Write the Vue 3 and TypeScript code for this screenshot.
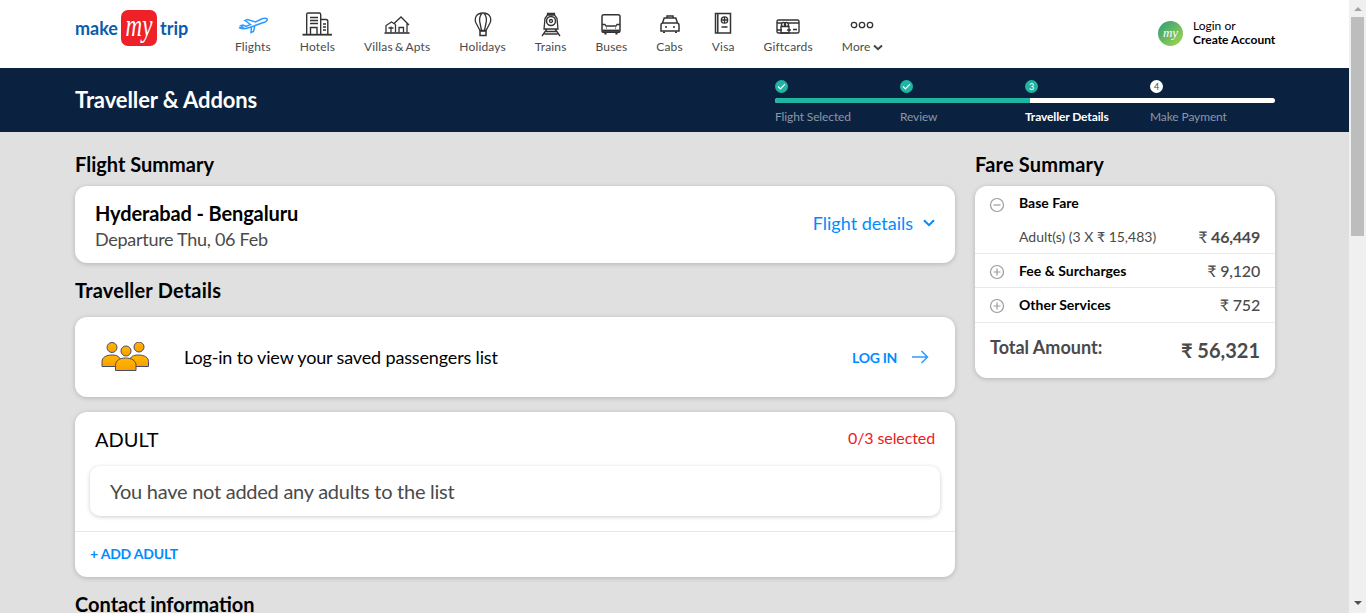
<template>
  <div class="page">
    <div class="scroll-area">
      <header class="topbar">
        <div class="wrap topbar-in">
          <div class="logo">
            <span class="logo-word">make</span>
            <span class="logo-box"><span class="logo-my">my</span></span>
            <span class="logo-word">trip</span>
          </div>
          <nav class="nav">
            <div v-for="item in navItems" :key="item.label" class="nav-item">
              <svg class="nav-icon" :width="item.w" height="28" :viewBox="`0 0 ${item.w} 28`" fill="none" stroke="#333" stroke-width="1.3" v-html="item.icon"></svg>
              <span class="nav-label">
                {{ item.label }}
                <svg v-if="item.label === 'More'" width="10" height="7" viewBox="0 0 10 7" fill="none" stroke="#444" stroke-width="2"><path d="M1 1.5 5 5.2 9 1.5" /></svg>
              </span>
            </div>
          </nav>
          <div class="login">
            <span class="login-badge"><span>my</span></span>
            <div class="login-text">
              <span>Login or</span>
              <b>Create Account</b>
            </div>
          </div>
        </div>
      </header>

      <section class="band">
        <div class="wrap band-in">
          <h1>Traveller &amp; Addons</h1>
          <div class="stepper">
            <div class="step-dots">
              <div v-for="(s, i) in steps" :key="s.label" class="step-dot-cell">
                <span class="dot" :class="{ white: s.state === 'todo' }">
                  <svg v-if="s.state === 'done'" width="9" height="7" viewBox="0 0 9 7" fill="none" stroke="#fff" stroke-width="1.2"><path d="M1 3.5 3.4 5.8 8 1.2" /></svg>
                  <template v-else>{{ i + 1 }}</template>
                </span>
              </div>
            </div>
            <div class="step-bar"><div class="step-fill" :style="{ width: progress + 'px' }"></div></div>
            <div class="step-labels">
              <span v-for="s in steps" :key="s.label" :class="{ active: s.state === 'active' }">{{ s.label }}</span>
            </div>
          </div>
        </div>
      </section>

      <main class="wrap columns">
        <div class="left">
          <h2 class="sec first">Flight Summary</h2>
          <div class="card flight">
            <div class="flight-info">
              <div class="route">Hyderabad - Bengaluru</div>
              <div class="depart">Departure Thu, 06 Feb</div>
            </div>
            <div class="details-link">
              Flight details
              <svg width="12" height="8" viewBox="0 0 12 8" fill="none" stroke="#008cff" stroke-width="2"><path d="M1 1.2 6 6.2 11 1.2" /></svg>
            </div>
          </div>

          <h2 class="sec second wide">Traveller Details</h2>
          <div class="card login-card">
            <svg class="people" width="48" height="30" viewBox="0 0 48 30">
              <defs>
                <linearGradient id="gold" x1="0" y1="0" x2="0" y2="1">
                  <stop offset="0" stop-color="#ffb800" />
                  <stop offset="1" stop-color="#fb9f00" />
                </linearGradient>
              </defs>
              <g fill="url(#gold)" stroke="#4a4a6a" stroke-width="1">
                <circle cx="11" cy="5.500" r="5" />
                <circle cx="38" cy="5" r="5" />
                <path d="M1 24.500v-5C1 15.500 5 13 11 13S18 15 20 18v6.500z" />
                <path d="M47.500 24.500v-5c0-4-4-6.500-10-6.500S30 15 28 18v6.500z" />
                <circle cx="25" cy="9" r="5" />
                <path d="M14.500 28.500v-5c0-5 4-7.500 10-7.500s10.500 2.500 10.500 7.500v5z" />
              </g>
            </svg>
            <span class="login-msg">Log-in to view your saved passengers list</span>
            <div class="login-link">
              LOG IN
              <svg width="18" height="14" viewBox="0 0 18 14" fill="none" stroke="#2e9bff" stroke-width="1.500"><path d="M1 7h15.500M10.500 1l6 6-6 6" /></svg>
            </div>
          </div>

          <div class="card adult">
            <div class="adult-head">
              <span class="adult-title">ADULT</span>
              <span class="adult-count">0/3 selected</span>
            </div>
            <div class="adult-empty">You have not added any adults to the list</div>
            <div class="adult-foot">+ ADD ADULT</div>
          </div>

          <h2 class="sec third">Contact information</h2>
          <div class="card contact"></div>
        </div>

        <aside class="right">
          <h2 class="sec first wide">Fare Summary</h2>
          <div class="card fare">
            <div class="fare-row base">
              <svg class="toggle" width="16" height="16" viewBox="0 0 16 16" fill="none" stroke="#9b9b9b" stroke-width="1.200"><circle cx="8" cy="8" r="6.500" /><path d="M4.500 8h7" /></svg>
              <b class="fare-name">Base Fare</b>
            </div>
            <div class="fare-row sub">
              <span class="fare-sub">Adult(s) (3 X ₹ 15,483)</span>
              <span class="fare-amt strong"><i>₹</i> 46,449</span>
            </div>
            <div v-for="r in fareRows" :key="r.name" class="fare-row line" :class="r.cls">
              <svg class="toggle" width="16" height="16" viewBox="0 0 16 16" fill="none" stroke="#9b9b9b" stroke-width="1.200"><circle cx="8" cy="8" r="6.500" /><path d="M4.500 8h7M8 4.500v7" /></svg>
              <b class="fare-name">{{ r.name }}</b>
              <span class="fare-amt"><i>₹</i> {{ r.amount }}</span>
            </div>
            <div class="fare-total">
              <span>Total Amount:</span>
              <span class="total-amt">₹ 56,321</span>
            </div>
          </div>
        </aside>
      </main>
    </div>

    <div class="scrollbar">
      <span class="arrow up"></span>
      <span class="thumb"></span>
      <span class="arrow down"></span>
    </div>
  </div>
</template>

<script setup lang="ts">
interface NavItem {
  label: string
  w: number
  icon: string
}

const navItems: NavItem[] = [
  {
    label: 'Flights',
    w: 32,
    icon: '<path stroke="#2e9bff" stroke-width="1.5" d="M2 17.500c3 1.500 6 1.500 9 .5l17-6c2.500-1 3-3 1.500-3.500-2-.6-4 0-6 1l-5 2.500-8-2.500-2.500 1 5.500 4-4.500 2-3-1.500-2.200.6 3 2.500zM18 15l-1.500 6.500-2.500 1 .5-6"/>',
  },
  {
    label: 'Hotels',
    w: 32,
    icon: '<path stroke-width="1.400" d="M5.700 24V4.500q0-1.500 1.500-1.500h11q1.500 0 1.500 1.500V24M20 9.500h5q1.800 0 1.800 1.800V24M9 7.500h8M9 10.500h8M9 13.500h8M9.500 24v-6.500h6.500V24M22 14h3M22 17h3M22 20h3"/><path stroke-width="1.800" d="M1.500 24.700h29.500"/>',
  },
  {
    label: 'Villas & Apts',
    w: 32,
    icon: '<path d="M5 22.500v-7l5.500-3.500 4 2.500M10 22.500v-6M13 13.500 20 7l8 8M14.500 22.500v-8M26 13.500v9M18 22.500v-5h4.500v5M7.500 18h5"/><path stroke-width="1.600" d="M3.500 23h25"/>',
  },
  {
    label: 'Holidays',
    w: 18,
    icon: '<path d="M6 20.500 2 13C.2 9 1.500 3 9 3s8.800 6 7 10l-4 7.500zM9 3c-3 1-4 6-3 10l1.500 7.500M9 3c3 1 4 6 3 10l-1.500 7.500"/><path stroke-width="1.500" d="M6 21h6v4.500H6z"/>',
  },
  {
    label: 'Trains',
    w: 24,
    icon: '<path d="M8.500 5V3.500h7V5M6 8.500 8.500 5h7L18 8.500 19 19H5zM3 26l5-7M21 26l-5-7M5.500 24h13M7 21.500h10"/><circle cx="12" cy="11" r="4.500" stroke-width="1.500"/><circle cx="12" cy="11" r="1.500"/>',
  },
  {
    label: 'Buses',
    w: 22,
    icon: '<rect x="2" y="4.700" width="18" height="17.500" rx="1.800" stroke-width="1.500"/><path stroke-width="1.300" d="M2 14.500h3l1 1.500h10l1-1.500h3"/><path stroke-width="2.200" d="M2.500 20.700h17"/><path stroke-width="1.200" d="M6 18.200h.8M15.200 18.200h.8"/><path stroke-width="2.200" d="M5.500 22.500v2M16.500 22.500v2"/>',
  },
  {
    label: 'Cabs',
    w: 24,
    icon: '<path stroke-width="1.500" d="M3 15q0-1.500 1.500-2l1.700-5h11.600l1.700 5q1.500.5 1.500 2v6H3zM4.500 13h15M9 8V6h6v2M7 17h2M15 17h2"/><path stroke-width="2" d="M6 21.500V23M18 21.500V23"/>',
  },
  {
    label: 'Visa',
    w: 20,
    icon: '<path stroke-width="1.500" d="M2.500 3.500h15v19.500h-15zM4.800 3.500V23"/><circle cx="11.500" cy="10" r="3.200"/><path d="M8.500 10h6M11.500 7v6M8.500 17h6"/>',
  },
  {
    label: 'Giftcards',
    w: 26,
    icon: '<rect x="2" y="10" width="22" height="13" rx="1.500" stroke-width="1.400"/><path stroke-width="1.400" d="M2 13h5M12 13h12M2 20h5M12 20h4M8.500 12.500a2 2 0 1 0 0 4 2 2 0 1 0 0-4zM11.500 12.500a2 2 0 1 1 0 4 2 2 0 1 1 0-4zM6 16.500h8V23H6z"/><path stroke-width="1.600" d="M18 19.500h4"/>',
  },
  {
    label: 'More',
    w: 26,
    icon: '<circle cx="5" cy="15" r="2.700"/><circle cx="13" cy="15" r="2.700"/><circle cx="21" cy="15" r="2.700"/>',
  },
]

const steps = [
  { label: 'Flight Selected', state: 'done' },
  { label: 'Review', state: 'done' },
  { label: 'Traveller Details', state: 'active' },
  { label: 'Make Payment', state: 'todo' },
]

const progress = 255

const fareRows = [
  { name: 'Fee & Surcharges', amount: '9,120', cls: '' },
  { name: 'Other Services', amount: '752', cls: 'tall' },
]
</script>

<style scoped>
.page {
  display: flex;
  height: 613px;
  overflow: hidden;
  background: #e0e0e0;
  font-family: Lato, "Open Sans", sans-serif;
  color: #000;
}
.page * {
  box-sizing: border-box;
}
.scroll-area {
  flex: 1;
  min-width: 0;
  overflow: hidden;
}

/* drawn scrollbar */
.scrollbar {
  width: 17px;
  flex: none;
  position: relative;
  background: #f0f0f0;
}
.thumb {
  position: absolute;
  left: 2px;
  top: 17px;
  width: 13px;
  height: 219px;
  background: #bdbdbd;
}
.arrow {
  position: absolute;
  left: 5px;
  width: 0;
  height: 0;
  border-left: 4px solid transparent;
  border-right: 4px solid transparent;
}
.arrow.up {
  top: 7px;
  border-bottom: 4px solid #a3a3a3;
}
.arrow.down {
  top: 601px;
  border-top: 4px solid #505050;
}

.wrap {
  width: 1200px;
  margin-left: 75px;
}

/* header */
.topbar {
  height: 68px;
  background: #fff;
}
.topbar-in {
  display: flex;
  height: 68px;
}
.logo {
  display: flex;
  align-items: center;
  height: 56px;
  width: 160px;
  flex: none;
}
.logo-word {
  font-size: 18px;
  font-weight: 700;
  color: #0b5cad;
}
.logo-box {
  width: 36px;
  height: 36px;
  margin: 0 3px;
  background: #ed2127;
  border-radius: 7px;
  display: flex;
  justify-content: center;
  overflow: hidden;
}
.logo-my {
  font-family: "Liberation Serif", serif;
  font-style: italic;
  font-size: 23px;
  line-height: 36px;
  color: #fff;
  transform: scaleY(1.35) translateY(-1px);
}
.nav {
  display: flex;
  gap: 29px;
  padding-top: 10px;
  flex: 1;
}
.nav-item {
  display: flex;
  flex-direction: column;
  align-items: center;
}
.nav-icon {
  display: block;
}
.nav-label {
  margin-top: 2px;
  font-size: 12px;
  line-height: 14px;
  letter-spacing: 0.15px;
  word-spacing: -1px;
  color: #4a4a4a;
  white-space: nowrap;
}
.login {
  display: flex;
  align-items: center;
  height: 66px;
  width: 117px;
  gap: 10px;
  flex: none;
}
.login-badge {
  width: 25px;
  height: 25px;
  border-radius: 50%;
  background: linear-gradient(135deg, #2d9a78, #a6d94f);
  display: flex;
  align-items: center;
  justify-content: center;
  flex: none;
}
.login-badge span {
  font-family: "Liberation Serif", serif;
  font-style: italic;
  font-size: 13px;
  color: #fff;
}
.login-text {
  display: flex;
  flex-direction: column;
  font-size: 12px;
  line-height: 14px;
  white-space: nowrap;
}
.login-text b {
  font-weight: 700;
}

/* dark band */
.band {
  height: 64px;
  background: #0a2240;
}
.band-in {
  display: flex;
  justify-content: space-between;
  height: 64px;
}
.band h1 {
  margin: 0;
  font-size: 22px;
  font-weight: 700;
  line-height: 64px;
  letter-spacing: -0.1px;
  color: #fff;
}
.stepper {
  width: 500px;
  padding-top: 12px;
}
.step-dots,
.step-labels {
  display: grid;
  grid-template-columns: repeat(4, 125px);
}
.dot {
  width: 13px;
  height: 13px;
  border-radius: 50%;
  background: #1fb5a3;
  color: #fff;
  font-size: 9px;
  line-height: 13px;
  display: flex;
  align-items: center;
  justify-content: center;
}
.dot.white {
  background: #fff;
  color: #4a4a4a;
}
.step-bar {
  height: 5px;
  margin-top: 5px;
  background: #fff;
  border-radius: 3px;
  overflow: hidden;
}
.step-fill {
  height: 5px;
  background: #1fb5a3;
}
.step-labels {
  margin-top: 6px;
  font-size: 12px;
  line-height: 16px;
  letter-spacing: -0.12px;
  color: #8b97a6;
}
.step-labels .active {
  color: #fff;
  font-weight: 700;
}

/* columns */
.columns {
  display: flex;
  gap: 20px;
  align-items: flex-start;
}
.left {
  width: 880px;
  padding-bottom: 40px;
  flex: none;
}
.right {
  width: 300px;
  flex: none;
}
.sec {
  margin: 0;
  font-size: 20px;
  font-weight: 700;
  line-height: 24px;
}
.sec.wide {
  letter-spacing: 0.2px;
}
.sec.first {
  margin-top: 20px;
  margin-bottom: 10px;
}
.sec.second {
  margin-top: 15px;
  margin-bottom: 15px;
}
.sec.third {
  margin-top: 15px;
  margin-bottom: 10px;
}
.card {
  background: #fff;
  border-radius: 12px;
  box-shadow: 0 1px 5px rgba(0, 0, 0, 0.2);
}

/* flight card */
.flight {
  height: 77px;
  padding: 0 20px;
  display: flex;
  align-items: center;
  justify-content: space-between;
}
.flight-info {
  margin-top: 2px;
}
.route {
  font-size: 20px;
  font-weight: 700;
  line-height: 26px;
  letter-spacing: -0.12px;
}
.depart {
  font-size: 18px;
  line-height: 26px;
  letter-spacing: -0.28px;
  color: #4a4a4a;
}
.details-link {
  display: flex;
  align-items: center;
  gap: 10px;
  font-size: 18px;
  color: #008cff;
  margin-top: -3px;
}

/* login prompt */
.login-card {
  height: 80px;
  padding: 0 26px;
  display: flex;
  align-items: center;
}
.people {
  margin-right: 35px;
  flex: none;
}
.login-msg {
  font-size: 18px;
  letter-spacing: -0.15px;
  flex: 1;
}
.login-link {
  display: flex;
  align-items: center;
  gap: 14px;
  font-size: 14px;
  font-weight: 700;
  letter-spacing: -0.3px;
  color: #008cff;
}

/* adult */
.adult {
  height: 165px;
  margin-top: 15px;
  display: flex;
  flex-direction: column;
}
.adult-head {
  height: 54px;
  padding: 0 20px;
  display: flex;
  align-items: center;
  justify-content: space-between;
}
.adult-title {
  font-size: 20px;
}
.adult-count {
  font-size: 16px;
  letter-spacing: -0.1px;
  color: #eb2026;
  margin-top: -3px;
}
.adult-empty {
  height: 50px;
  margin: 0 15px;
  padding: 0 20px;
  font-size: 20px;
  line-height: 50px;
  letter-spacing: -0.26px;
  color: #4a4a4a;
  border-radius: 10px;
  box-shadow: 0 1px 4px rgba(0, 0, 0, 0.2);
}
.adult-foot {
  margin-top: 15px;
  padding: 0 15px 2px;
  flex: 1;
  border-top: 1px solid #e7e7e7;
  display: flex;
  align-items: center;
  font-size: 14px;
  font-weight: 700;
  letter-spacing: -0.2px;
  color: #008cff;
}
.contact {
  height: 160px;
}

/* fare */
.fare {
  height: 192px;
}
.fare-row {
  display: flex;
  align-items: center;
  padding: 0 15px 0 14px;
}
.fare-row.base {
  height: 34px;
}
.fare-row.sub {
  height: 34px;
  padding-left: 44px;
  padding-right: 15px;
  justify-content: space-between;
  border-bottom: 1px solid #e9e9e9;
}
.fare-row.line {
  height: 34px;
  padding-bottom: 1px;
  border-bottom: 1px solid #e9e9e9;
}
.fare-row.line.tall {
  height: 35px;
  padding-bottom: 2px;
}
.toggle {
  margin-right: 14px;
  margin-top: 3px;
  flex: none;
}
.fare-name {
  font-size: 14px;
  font-weight: 700;
  flex: 1;
}
.base .fare-name {
  margin-bottom: 2px;
}
.fare-sub {
  font-size: 14px;
  color: #4a4a4a;
}
.fare-amt {
  font-size: 16px;
  letter-spacing: -0.2px;
  color: #4a4a4a;
  font-weight: 500;
}
.fare-amt.strong {
  font-weight: 700;
}
.fare-amt i {
  font-style: normal;
  font-weight: 400;
}
.fare-total {
  display: flex;
  justify-content: space-between;
  padding: 13px 15px 0;
  color: #4a4a4a;
  font-size: 18px;
  font-weight: 700;
}
.total-amt {
  font-size: 20px;
  margin-top: 2px;
}
</style>
